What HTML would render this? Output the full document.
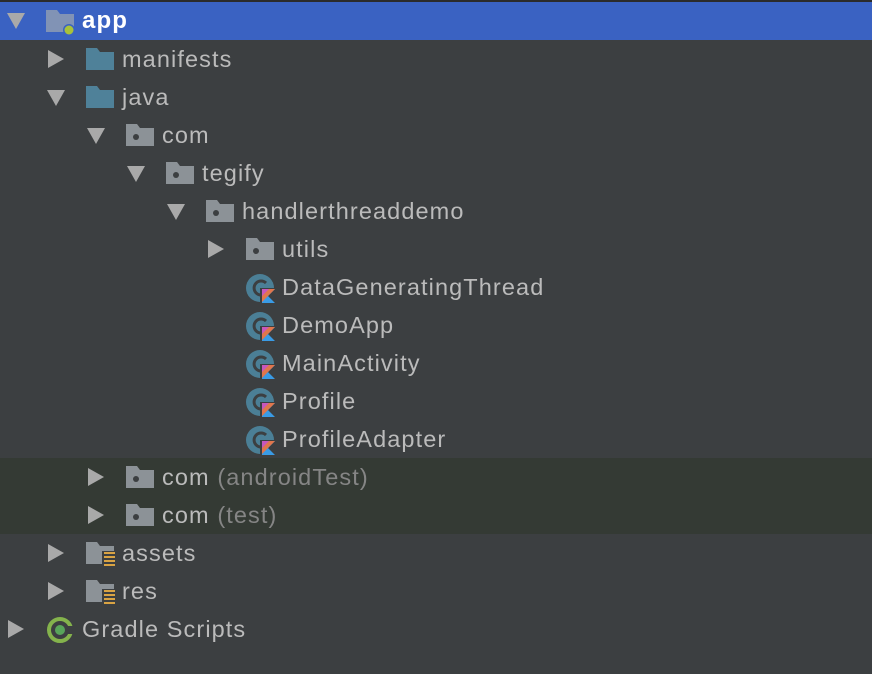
<!DOCTYPE html>
<html><head><meta charset="utf-8"><style>
body{margin:0;width:872px;height:674px;background:#3c3f41;overflow:hidden;position:relative;font-family:"Liberation Sans",sans-serif;}
.topline{position:absolute;left:0;top:0;width:872px;height:2px;background:#2b2b2b}
.row{position:absolute;left:0;width:872px;height:38px}
.sel{background:#3a62c2}
.grn{background:#343a34}
.t{position:absolute;top:0;line-height:38px;font-size:23.5px;color:#bbbbbb;letter-spacing:1.1px;white-space:nowrap}
.g{color:#858585}
svg{position:absolute}
</style></head><body>
<div class="topline"></div>
<div class="row sel" style="top:2px"></div>
<div class="row grn" style="top:458px;height:76px"></div>

<svg width="872" height="674" style="left:0;top:0">
<defs>
<g id="right"><polygon points="0,0 16,9 0,18" fill="#a9a9a9"/></g>
<g id="down"><polygon points="0,0 18,0 9,16" fill="#a9a9a9"/></g>
<g id="pkg"><path d="M0,0 H11 L14,4 H28 V22 H0Z" fill="#8c9297"/><circle cx="10" cy="13" r="3" fill="#3c3f41"/></g>
<g id="src"><path d="M0,0 H11 L14,4 H28 V22 H0Z" fill="#4f8199"/></g>
<g id="res"><path d="M0,0 H11 L14,4 H28 V22 H0Z" fill="#8c9297"/><rect x="16" y="9" width="14" height="15" fill="#3c3f41"/><g fill="#d9a343"><rect x="18" y="10" width="11" height="2"/><rect x="18" y="14" width="11" height="2"/><rect x="18" y="18" width="11" height="2"/><rect x="18" y="22" width="11" height="2"/></g></g>
<g id="cls"><circle cx="14" cy="15" r="14" fill="#4b7f96"/><path d="M20,10 A7,7 0 1 0 20,20" stroke="#3c3f41" stroke-width="3" fill="none"/><rect x="14" y="15" width="16" height="16" fill="#3c3f41"/><polygon points="16,16 29,16 22,23 29,30 16,30" fill="#3a9be5"/><polygon points="16,16 29,16 16,29" fill="#e0764c"/><polygon points="16,16 23,16 16,23" fill="#c757bc"/></g>
</defs>
<use href="#down" x="7" y="13"/>
<path d="M46,10 H57 L60,14 H74 V32 H46Z" fill="#8193b5"/>
<circle cx="69" cy="30" r="6" fill="#3a62c2"/><circle cx="69" cy="30" r="4.5" fill="#a9c23a"/>
<use href="#right" x="48" y="50"/><use href="#src" x="86" y="48"/>
<use href="#down" x="47" y="90"/><use href="#src" x="86" y="86"/>
<use href="#down" x="87" y="128"/><use href="#pkg" x="126" y="124"/>
<use href="#down" x="127" y="166"/><use href="#pkg" x="166" y="162"/>
<use href="#down" x="167" y="204"/><use href="#pkg" x="206" y="200"/>
<use href="#right" x="208" y="240"/><use href="#pkg" x="246" y="238"/>
<use href="#cls" x="246" y="273"/>
<use href="#cls" x="246" y="311"/>
<use href="#cls" x="246" y="349"/>
<use href="#cls" x="246" y="387"/>
<use href="#cls" x="246" y="425"/>
<use href="#right" x="88" y="468"/><use href="#pkg" x="126" y="466"/>
<use href="#right" x="88" y="506"/><use href="#pkg" x="126" y="504"/>
<use href="#right" x="48" y="544"/><use href="#res" x="86" y="542"/>
<use href="#right" x="48" y="582"/><use href="#res" x="86" y="580"/>
<use href="#right" x="8" y="620"/>
<circle cx="60" cy="630" r="11" fill="none" stroke="#84b34c" stroke-width="4"/>
<rect x="66" y="626" width="8" height="8" fill="#3c3f41"/>
<circle cx="60" cy="630" r="5" fill="#58a55a"/>
</svg>

<div class="t" style="left:82px;top:2px;color:#fff;font-weight:bold;font-size:24px">app</div>
<div class="t" style="left:122px;top:40px">manifests</div>
<div class="t" style="left:122px;top:78px">java</div>
<div class="t" style="left:162px;top:116px">com</div>
<div class="t" style="left:202px;top:154px">tegify</div>
<div class="t" style="left:242px;top:192px">handlerthreaddemo</div>
<div class="t" style="left:282px;top:230px">utils</div>
<div class="t" style="left:282px;top:268px">DataGeneratingThread</div>
<div class="t" style="left:282px;top:306px">DemoApp</div>
<div class="t" style="left:282px;top:344px">MainActivity</div>
<div class="t" style="left:282px;top:382px">Profile</div>
<div class="t" style="left:282px;top:420px">ProfileAdapter</div>
<div class="t" style="left:162px;top:458px">com <span class="g">(androidTest)</span></div>
<div class="t" style="left:162px;top:496px">com <span class="g">(test)</span></div>
<div class="t" style="left:122px;top:534px">assets</div>
<div class="t" style="left:122px;top:572px">res</div>
<div class="t" style="left:82px;top:610px">Gradle Scripts</div>
</body></html>
